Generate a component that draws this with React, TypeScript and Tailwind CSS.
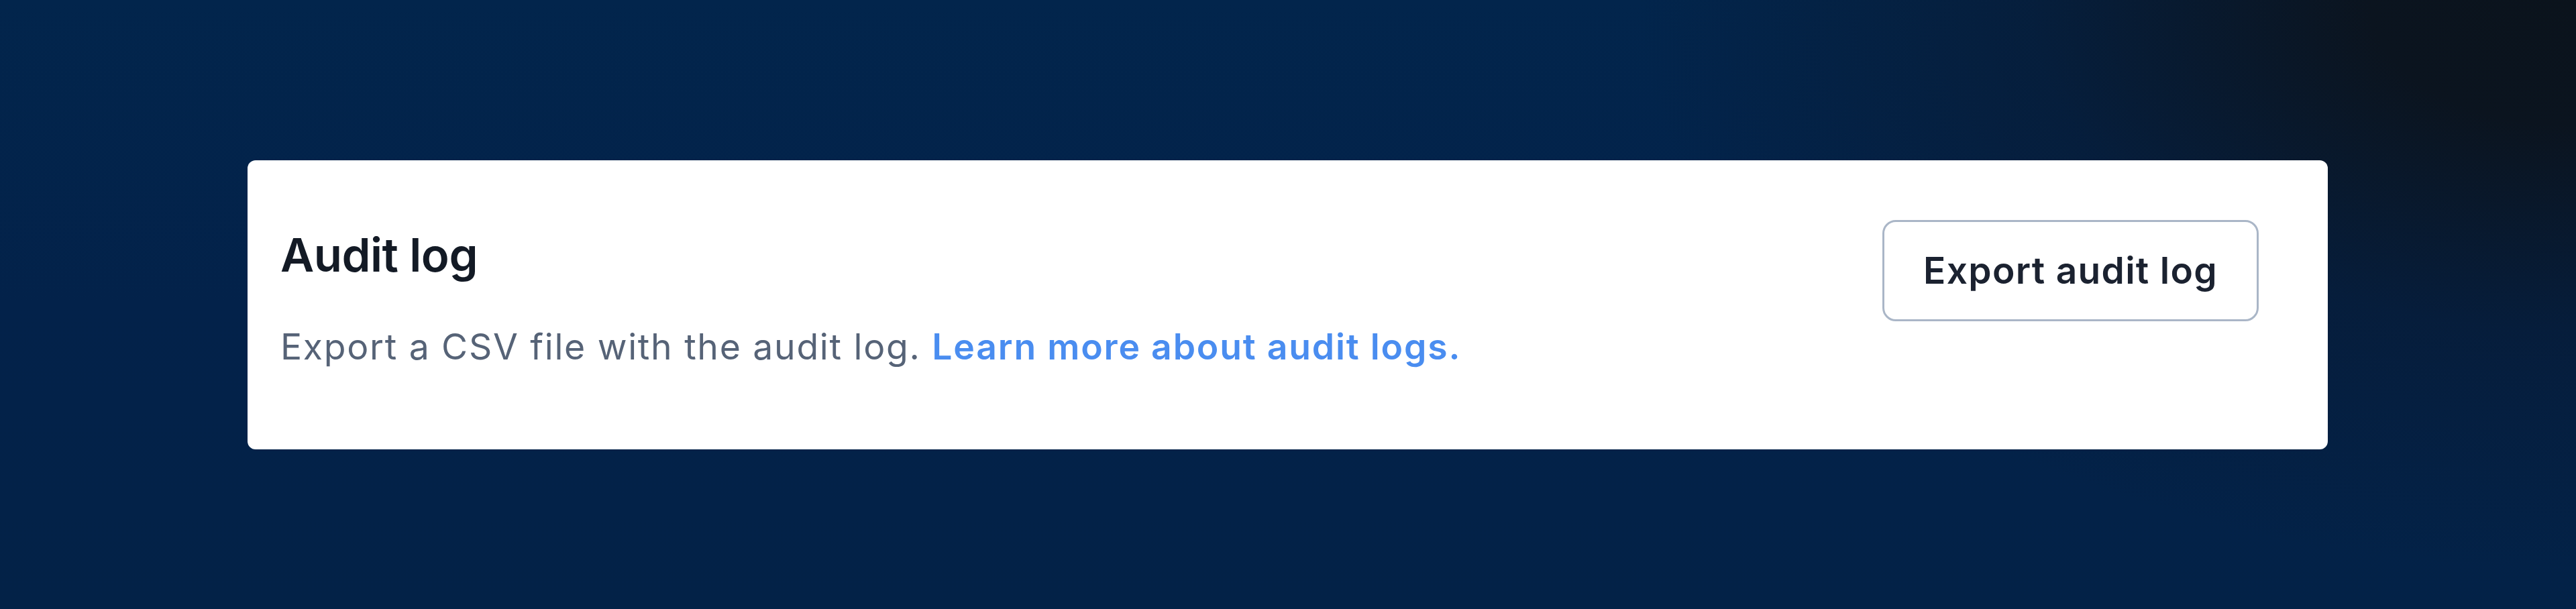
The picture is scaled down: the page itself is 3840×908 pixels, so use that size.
import React from "react";

export default function App() {
  return (
    <div
      className="w-[3840px] h-[908px] overflow-hidden bg-[#03234a] bg-[radial-gradient(ellipse_1400px_850px_at_100%_0%,#0b131c_0%,#0b141f_22%,rgba(8,26,50,0.6)_58%,rgba(3,35,74,0)_100%),linear-gradient(180deg,#02254c_0%,#03224a_50%,#032247_100%)]"
      style={{ fontFamily: 'Inter, "Noto Sans", sans-serif' }}
    >
      <div className="pt-[239px] pl-[369px]">
        <div className="w-[3101px] h-[431px] bg-white rounded-[12px] flex items-start justify-between pl-[49px] pr-[103px] pt-[89px]">
          <div className="pt-[10px] flex flex-col">
            <div className="text-[69px] leading-[84px] font-semibold text-[#131a25] tracking-[-0.5px]">
              Audit log
            </div>
            <div className="mt-[61px] text-[53.5px] leading-[68px] text-[#566377] tracking-[1.7px]">
              Export a CSV file with the audit log.{" "}
              <a className="font-semibold text-[#4a8df0] tracking-[1.8px]" href="#">
                Learn more about audit logs.
              </a>
            </div>
          </div>
          <button className="w-[561px] h-[151px] rounded-[20px] border-[3px] border-[#aab6c7] bg-white flex items-center justify-center text-[55px] font-semibold text-[#1b2230] tracking-[1.3px]">
            Export audit log
          </button>
        </div>
      </div>
    </div>
  );
}
